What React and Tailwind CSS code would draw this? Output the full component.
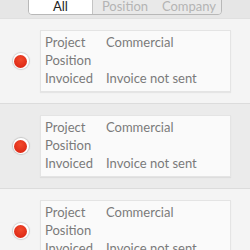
import React from "react";

const rows = [
  { bg: "bg-[#f4f4f4]" },
  { bg: "bg-[#ebebeb]" },
  { bg: "bg-[#f4f4f4]" },
];

function Row({ bg }) {
  return (
    <div className={`${bg} flex items-center h-[85px] border-b border-[#dcdcdc] shrink-0`}>
      <div className="w-[40px] flex justify-center pl-[1px]">
        <div className="w-[16px] h-[16px] rounded-full bg-white shadow-[0_0_1px_1px_rgba(0,0,0,0.15)] flex items-center justify-center">
          <div className="w-[13px] h-[13px] rounded-full bg-[radial-gradient(circle_at_50%_35%,#f24a2c,#d61f0f)]" />
        </div>
      </div>
      <div className="w-[191px] h-[62px] bg-[#fafafa] border border-[#e4e4e4] shadow-[0_1px_1px_rgba(0,0,0,0.06)] px-[4px] py-[2px] text-[13px] leading-[18px] text-[#7a7a7a]">
        <div className="flex"><span className="w-[61px]">Project</span><span>Commercial</span></div>
        <div className="flex"><span className="w-[61px]">Position</span><span></span></div>
        <div className="flex"><span className="w-[61px]">Invoiced</span><span>Invoice not sent</span></div>
      </div>
    </div>
  );
}

export default function App() {
  return (
    <div className="w-[250px] h-[250px] overflow-hidden flex flex-col bg-[#f4f4f4]" style={{ fontFamily: "'Lato', 'Noto Sans', sans-serif" }}>
      <div className="h-[19px] shrink-0 bg-[#e6e6e6] flex justify-center border-b border-[#e0e0e0]">
        <div className="w-[194px] h-[19px] -mt-[4px] flex border border-[#b8b8b8] rounded-b-[4px] overflow-hidden text-[13px] leading-[18px]">
          <div className="w-[64px] bg-white text-[#222] text-center border-r border-[#c4c4c4]">All</div>
          <div className="flex-1 bg-[#e9e9e9] text-[#b4b4b4] text-center">Position</div>
          <div className="flex-1 bg-[#e9e9e9] text-[#b4b4b4] text-center">Company</div>
        </div>
      </div>
      {rows.map((r, i) => (
        <Row key={i} bg={r.bg} />
      ))}
    </div>
  );
}
